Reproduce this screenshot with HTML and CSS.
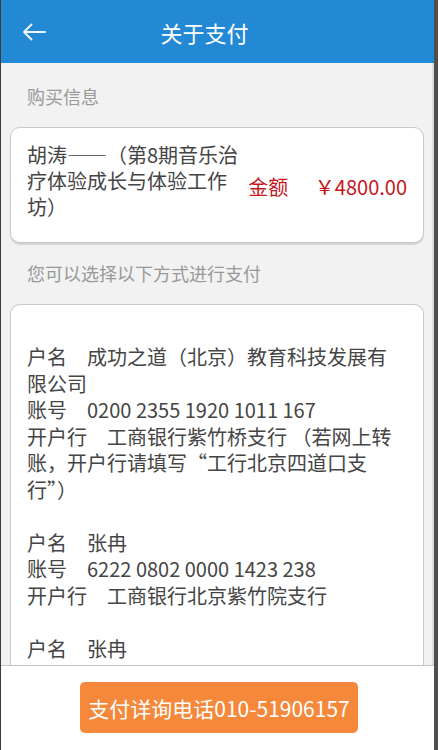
FILE: index.html
```html
<!DOCTYPE html>
<html lang="zh-CN">
<head>
    <meta charset="UTF-8">
    <meta name="viewport" content="width=device-width, initial-scale=1.0">
    <title>关于支付</title>
    <link rel="stylesheet" href="styles.css">
</head>
<body>

<div class="screen">
    <header class="topbar">
        <a class="back" href="#">
            <svg width="24" height="18" viewBox="0 0 24 18">
                <path d="M23 9H2M9.5 1.5L2 9l7.5 7.5" fill="none" stroke="#eef4fb" stroke-width="2" stroke-linecap="round" stroke-linejoin="round"/>
            </svg>
        </a>
        <h1>关于支付</h1>
    </header>

    <main class="content">
        <p class="section-title">购买信息</p>
        <div class="card order">
            <div class="order-name">胡涛——（第8期音乐治疗体验成长与体验工作坊）</div>
            <div class="order-price">
                <span>金额</span>
                <span class="amount">￥4800.00</span>
            </div>
        </div>

        <p class="section-title">您可以选择以下方式进行支付</p>
        <div class="card accounts">
            <div class="account">
                户名　成功之道（北京）教育科技发展有限公司<br>
                账号　0200 2355 1920 1011 167<br>
                开户行　工商银行紫竹桥支行 （若网上转账，开户行请填写“工行北京四道口支行”）
            </div>
            <div class="account">
                户名　张冉<br>
                账号　6222 0802 0000 1423 238<br>
                开户行　工商银行北京紫竹院支行
            </div>
            <div class="account">
                户名　张冉<br>
                账号　6222 0802 0000 1423 238<br>
                开户行　工商银行北京紫竹院支行
            </div>
        </div>
    </main>

    <footer class="bottom-bar">
        <button class="call-btn">支付详询电话010-51906157</button>
    </footer>
</div>

</body>
</html>
```

FILE: styles.css
```css
* {
    box-sizing: border-box;
}

body {
    margin: 0;
    font-family: "Noto Sans CJK SC", "Noto Sans", sans-serif;
    background: #f2f2f2;
}

.screen {
    width: 438px;
    height: 750px;
    display: flex;
    flex-direction: column;
    border-left: 1px solid #3c3c3c;
    border-right: 4px solid #4f4f4f;
    overflow: hidden;
}

.topbar {
    height: 63px;
    flex-shrink: 0;
    background: #2389d5;
    display: flex;
    align-items: center;
    padding: 0 0 0 21px;
}

.back {
    display: flex;
    width: 26px;
    margin-top: 1px;
}

.topbar h1 {
    flex: 1;
    margin: 0;
    padding-right: 73px;
    text-align: center;
    color: #fff;
    font-size: 22px;
    font-weight: normal;
    line-height: 30px;
}

.content {
    flex: 1;
    overflow: hidden;
    padding: 20px 8px 0 9px;
    border-right: 2px solid #dcdcdc;
}

.section-title {
    margin: 0 0 18px 17px;
    color: #999;
    font-size: 18px;
    line-height: 26px;
}

.section-title + .card.accounts {
    margin-top: 1px;
}

.card {
    background: #fff;
    border: 1px solid #c9c9c9;
    border-radius: 10px;
    color: #454545;
    font-size: 20px;
}

.order {
    display: flex;
    align-items: center;
    justify-content: space-between;
    height: 116px;
    margin-bottom: 17px;
    padding: 0 16px 8px 16px;
    box-shadow: 0 2px 1px rgba(0, 0, 0, 0.12);
}

.order-name {
    width: 230px;
    line-height: 26px;
}

.order-price {
    margin-top: 12px;
    color: #c4161c;
    line-height: 26px;
    white-space: nowrap;
}

.amount {
    margin-left: 22px;
}

.accounts {
    padding: 39px 21px 0 16px;
    min-height: 400px;
    border-bottom: none;
}

.account {
    line-height: 26.5px;
    margin-bottom: 26.5px;
}

.bottom-bar {
    height: 85px;
    flex-shrink: 0;
    background: #fff;
    border-top: 1px solid #c6c6c6;
    display: flex;
    justify-content: center;
    align-items: flex-start;
    padding-top: 16px;
}

.call-btn {
    width: 278px;
    height: 51px;
    margin-left: 3px;
    border: none;
    border-radius: 5px;
    background: #f5883b;
    color: #fff;
    font-family: "Noto Sans CJK SC", "Noto Sans", sans-serif;
    font-size: 21px;
    padding: 0;
    cursor: pointer;
}
```
